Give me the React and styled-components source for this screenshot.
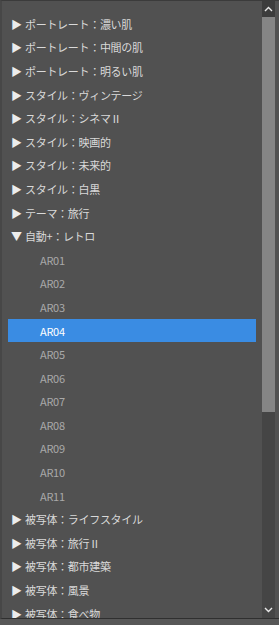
import React from "react";
import styled, { createGlobalStyle } from "styled-components";

const Global = createGlobalStyle`
  html, body {
    margin: 0;
    padding: 0;
    background: #575757;
  }
`;

const Panel = styled.div`
  display: flex;
  height: 617px;
  background: #515151;
  border-top: 1px solid #3b3b3b;
  border-left: 2px solid #474747;
  border-bottom: 1px solid #2f2f2f;
  overflow: hidden;
  font-family: "Noto Sans CJK JP", "Noto Sans", sans-serif;
`;

const List = styled.ul`
  flex: 1;
  margin: 0;
  padding: 11px 6px 0 6px;
  list-style: none;
  overflow: hidden;
`;

const Row = styled.li`
  display: flex;
  align-items: center;
  height: 23.6px;
  padding-left: ${p => (p.$child ? "32px" : "3px")};
  font-size: 11px;
  letter-spacing: -0.3px;
  color: ${p => (p.$selected ? "#ffffff" : p.$child ? "#a9a9a9" : "#d9d9d9")};
  background: ${p => (p.$selected ? "#3a8ce3" : "transparent")};
  white-space: nowrap;
`;

const Arrow = styled.span`
  width: 14px;
  font-size: 11px;
  color: #ececec;
`;

const Scrollbar = styled.div`
  display: flex;
  flex-direction: column;
  width: 13px;
  margin-right: 4px;
  background: #454545;
`;

const ScrollButton = styled.div`
  display: flex;
  align-items: center;
  justify-content: center;
  height: 16px;
  background: ${p => (p.$top ? "#3c3c3c" : "#454545")};
`;

const Thumb = styled.div`
  height: 395px;
  background: #858585;
`;

const Track = styled.div`
  flex: 1;
`;

const Chevron = ({ up }) => (
  <svg width="9" height="6" viewBox="0 0 9 6">
    <path
      d={up ? "M1 5 L4.5 1.5 L8 5" : "M1 1 L4.5 4.5 L8 1"}
      fill="none"
      stroke="#e8e8e8"
      strokeWidth="1.4"
    />
  </svg>
);

const before = [
  "ポートレート：濃い肌",
  "ポートレート：中間の肌",
  "ポートレート：明るい肌",
  "スタイル：ヴィンテージ",
  "スタイル：シネマⅡ",
  "スタイル：映画的",
  "スタイル：未来的",
  "スタイル：白黒",
  "テーマ：旅行",
];

const children = ["AR01", "AR02", "AR03", "AR04", "AR05", "AR06", "AR07", "AR08", "AR09", "AR10", "AR11"];

const after = [
  "被写体：ライフスタイル",
  "被写体：旅行Ⅱ",
  "被写体：都市建築",
  "被写体：風景",
  "被写体：食べ物",
];

export default function App() {
  return (
    <>
      <Global />
      <Panel>
        <List>
          {before.map(t => (
            <Row key={t}>
              <Arrow>▶</Arrow>
              {t}
            </Row>
          ))}
          <Row>
            <Arrow>▼</Arrow>
            自動+：レトロ
          </Row>
          {children.map(c => (
            <Row key={c} $child $selected={c === "AR04"}>
              {c}
            </Row>
          ))}
          {after.map(t => (
            <Row key={t}>
              <Arrow>▶</Arrow>
              {t}
            </Row>
          ))}
        </List>
        <Scrollbar>
          <ScrollButton $top>
            <Chevron up />
          </ScrollButton>
          <Thumb />
          <Track />
          <ScrollButton>
            <Chevron />
          </ScrollButton>
        </Scrollbar>
      </Panel>
    </>
  );
}
